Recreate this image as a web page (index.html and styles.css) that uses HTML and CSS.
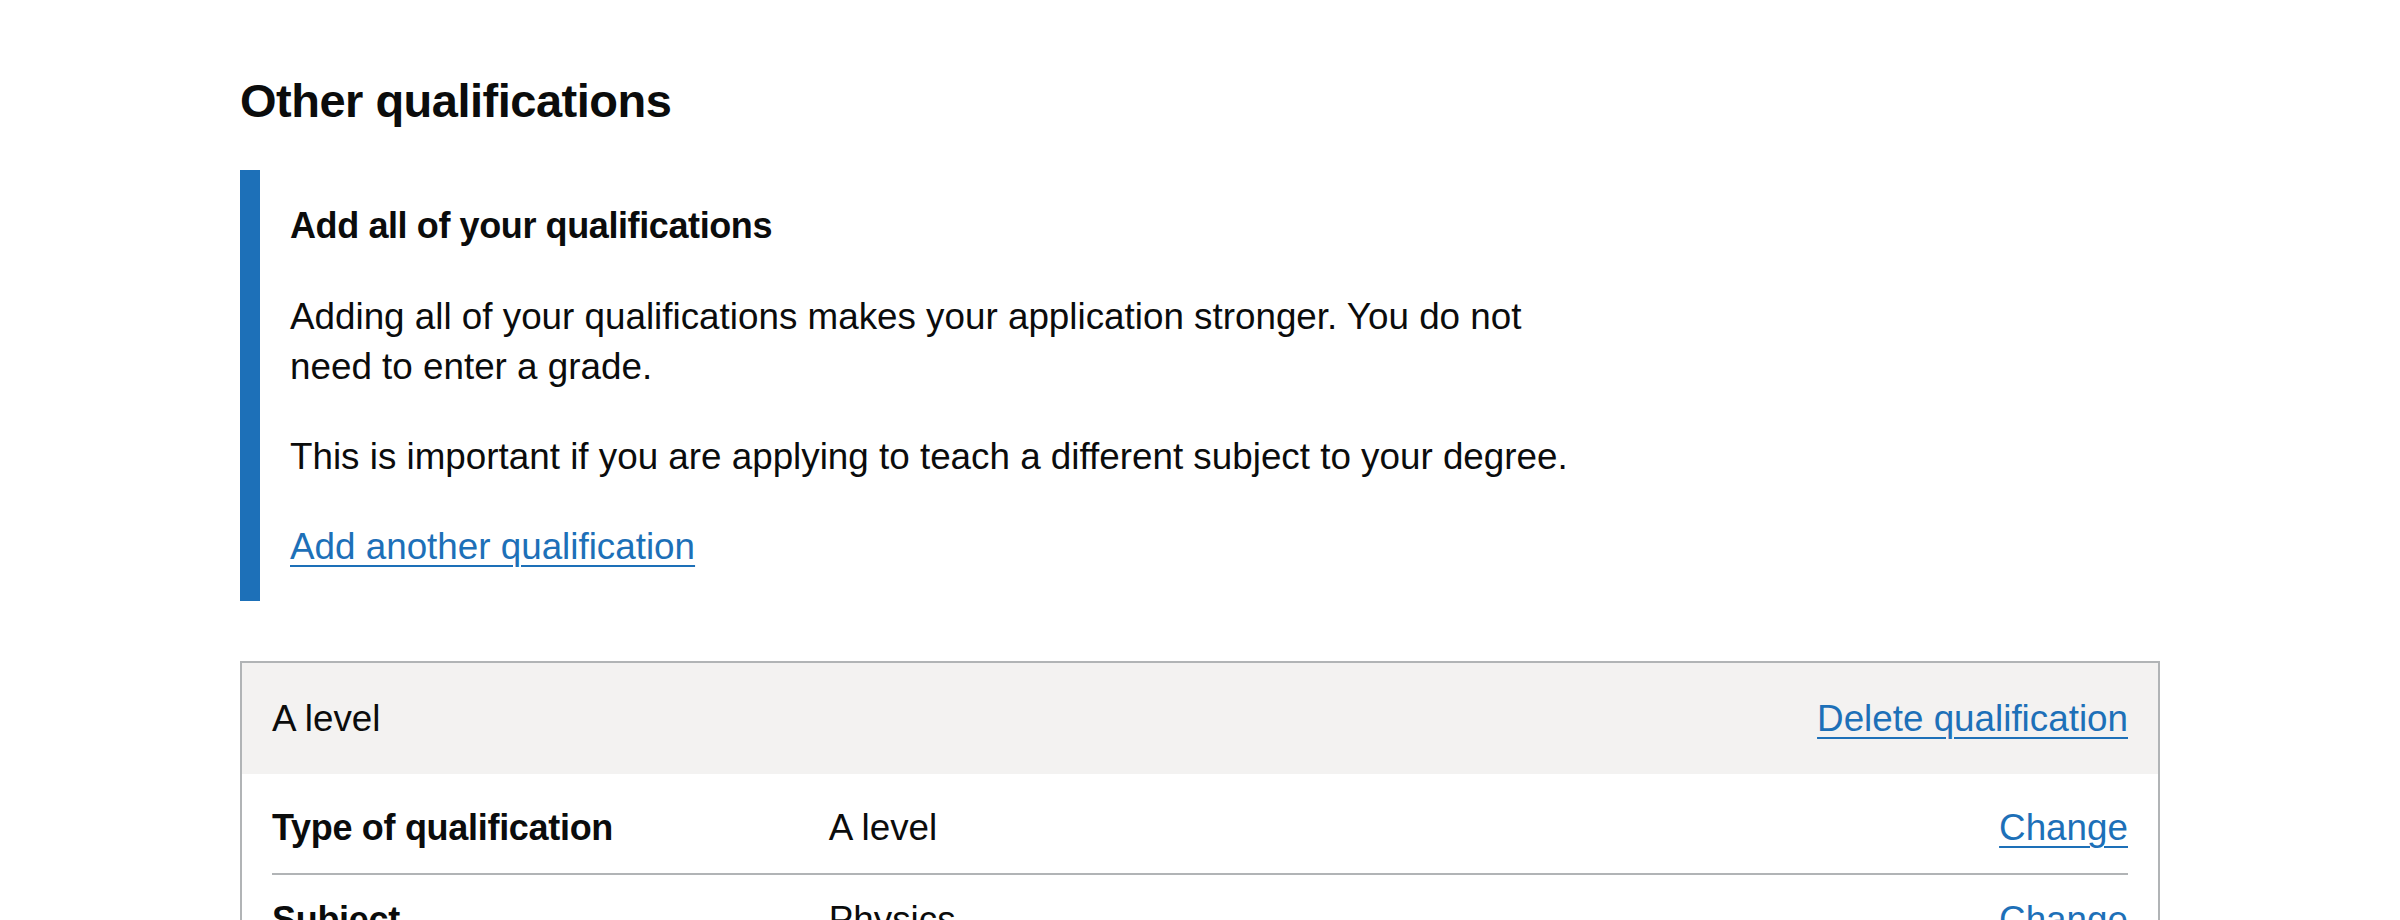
FILE: index.html
```html
<!DOCTYPE html>
<html lang="en">
<head>
<meta charset="utf-8">
<title>Other qualifications</title>
<link rel="stylesheet" href="styles.css">
</head>
<body>
<main class="page">
  <h1 class="heading">Other qualifications</h1>

  <div class="inset">
    <h2 class="inset-title">Add all of your qualifications</h2>
    <p class="body">Adding all of your qualifications makes your application stronger. You do not need to enter a grade.</p>
    <p class="body">This is important if you are applying to teach a different subject to your degree.</p>
    <p class="body last"><a class="link" href="#">Add another qualification</a></p>
  </div>

  <section class="card">
    <div class="card-header">
      <span class="card-title">A level</span>
      <a class="link" href="#">Delete qualification</a>
    </div>
    <dl class="summary">
      <div class="row">
        <dt class="key">Type of qualification</dt>
        <dd class="value">A level</dd>
        <dd class="actions"><a class="link" href="#">Change</a></dd>
      </div>
      <div class="row">
        <dt class="key">Subject</dt>
        <dd class="value">Physics</dd>
        <dd class="actions"><a class="link" href="#">Change</a></dd>
      </div>
    </dl>
  </section>
</main>
</body>
</html>
```

FILE: styles.css
```css
* {
  box-sizing: border-box;
}

html, body {
  margin: 0;
  padding: 0;
  background: #ffffff;
}

body {
  font-family: "Liberation Sans", Arial, sans-serif;
  color: #0b0c0c;
  font-size: 36.8px;
  line-height: 50px;
}

.page {
  width: 1920px;
  margin: 0 auto;
  padding-top: 71px;
}

.heading {
  margin: 0 0 39px 0;
  font-size: 47px;
  line-height: 60px;
  font-weight: 700;
  letter-spacing: -0.5px;
}

.inset {
  border-left: 20px solid #1d70b8;
  padding: 31px 30px 29px 30px;
  margin: 0 0 60px 0;
  width: 1370px;
}

.inset-title {
  margin: 0 0 41px 0;
  font-size: 36px;
  line-height: 50px;
  font-weight: 700;
  letter-spacing: -0.4px;
}

.body {
  margin: 0 0 40px 0;
}

.body.last {
  margin-bottom: 0;
}

.link {
  color: #1d70b8;
  text-decoration: underline;
  text-decoration-thickness: 2px;
  text-underline-offset: 0.16em;
}

.card {
  border: 2px solid #b1b4b6;
}

.card-header {
  display: flex;
  justify-content: space-between;
  align-items: baseline;
  background: #f3f2f1;
  padding: 31px 30px 30px 30px;
}

.summary {
  margin: 0;
  padding: 9px 30px 0 30px;
}

.row {
  display: grid;
  grid-template-columns: 30% 50% 20%;
  padding: 20px 0;
  border-bottom: 2px solid #b1b4b6;
}

.key {
  font-weight: 700;
  font-size: 36px;
  letter-spacing: -0.3px;
  padding-right: 20px;
}

.value {
  margin: 0;
  padding-right: 20px;
}

.actions {
  margin: 0;
  text-align: right;
}
```
